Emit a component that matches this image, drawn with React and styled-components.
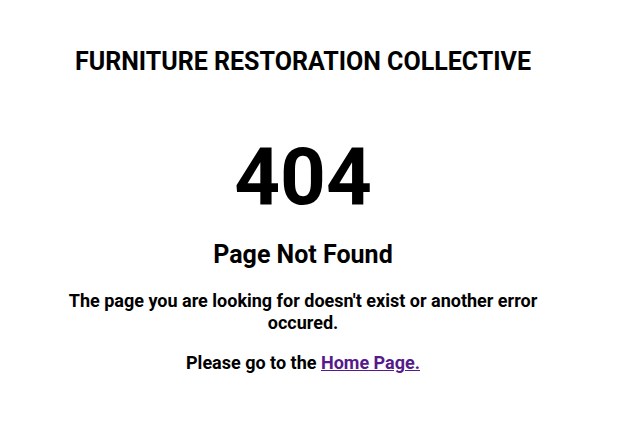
import React from 'react';
import styled, { createGlobalStyle } from 'styled-components';

const GlobalStyle = createGlobalStyle`
  body {
    margin: 0;
    background: #fff;
    font-family: Roboto, "Liberation Sans", sans-serif;
    color: #000;
  }
`;

const Page = styled.div`
  width: 590px;
  margin-left: 8px;
  display: flex;
  flex-direction: column;
  align-items: center;
  text-align: center;
  font-weight: 700;
`;

const Title = styled.h1`
  margin: 47px 0 0;
  font-size: 25px;
  line-height: 29px;
  font-weight: 700;
`;

const Code = styled.div`
  margin-top: 54px;
  font-size: 80px;
  line-height: 94px;
`;

const Heading = styled.h2`
  margin: 16px 0 0;
  font-size: 25px;
  line-height: 29px;
  font-weight: 700;
`;

const Text = styled.p`
  margin: ${props => props.top}px 0 0;
  max-width: 500px;
  font-size: 18px;
  line-height: 22px;
`;

const Link = styled.a`
  color: #551a8b;
  text-decoration: underline;
`;

const App = () => {
  return (
    <>
      <GlobalStyle />
      <Page>
        <Title>FURNITURE RESTORATION COLLECTIVE</Title>
        <Code>404</Code>
        <Heading>Page Not Found</Heading>
        <Text top={21}>The page you are looking for doesn't exist or another error occured.</Text>
        <Text top={18}>
          Please go to the <Link href="#">Home Page.</Link>
        </Text>
      </Page>
    </>
  );
};

export default App;
